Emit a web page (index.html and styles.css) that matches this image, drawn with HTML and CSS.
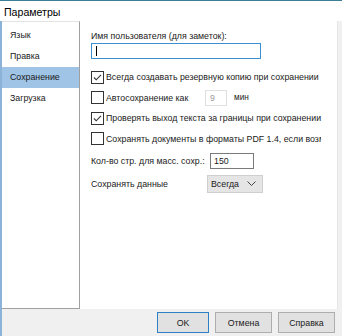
FILE: index.html
```html
<!DOCTYPE html>
<html>
<head>
  <title>Параметры</title>
  <meta charset="utf-8">
  <link rel="stylesheet" href="styles.css">
</head>
<body>
  <div class="window">
    <div class="titlebar">Параметры</div>

    <div class="main">
      <!-- Left list -->
      <div class="nav">
        <div class="nav-item">Язык</div>
        <div class="nav-item">Правка</div>
        <div class="nav-item selected">Сохранение</div>
        <div class="nav-item">Загрузка</div>
      </div>

      <!-- Settings page -->
      <div class="panel">
        <div class="label">Имя пользователя (для заметок):</div>
        <div class="textbox focused"><span class="caret"></span></div>

        <div class="row check-row first">
          <span class="check"><svg viewBox="0 0 13 13" width="13" height="13"><path d="M3 6.5 L5.2 8.8 L10 3.8" fill="none" stroke="#333" stroke-width="1.1"/></svg></span>
          <span>Всегда создавать резервную копию при сохранении</span>
        </div>
        <div class="row check-row">
          <span class="check"></span>
          <span class="autosave">Автосохранение как</span>
          <span class="spin">9</span>
          <span class="unit">мин</span>
        </div>
        <div class="row check-row">
          <span class="check"><svg viewBox="0 0 13 13" width="13" height="13"><path d="M3 6.5 L5.2 8.8 L10 3.8" fill="none" stroke="#333" stroke-width="1.1"/></svg></span>
          <span>Проверять выход текста за границы при сохранении</span>
        </div>
        <div class="row check-row">
          <span class="check"></span>
          <span class="clip">Сохранять документы в форматы PDF 1.4, если возможно</span>
        </div>
        <div class="row field-row">
          <span class="field-label">Кол-во стр. для масс. сохр.:</span>
          <span class="numbox">150</span>
        </div>
        <div class="row field-row">
          <span class="field-label wide">Сохранять данные</span>
          <span class="select">Всегда<svg viewBox="0 0 9 6" width="9" height="6"><path d="M0.5 0.5 L4.5 4.5 L8.5 0.5" fill="none" stroke="#444" stroke-width="1"/></svg></span>
        </div>
      </div>
    </div>

    <div class="footer">
      <button class="btn default">OK</button>
      <button class="btn">Отмена</button>
      <button class="btn">Справка</button>
    </div>
  </div>
</body>
</html>
```

FILE: styles.css
```css
body {
  margin: 0;
  font-family: 'Liberation Sans', 'DejaVu Sans', sans-serif;
  font-size: 8.8px;
  color: #1a1a1a;
  background: #f0f0f0;
}

.window {
  width: 342px;
  height: 336px;
  display: flex;
  flex-direction: column;
  background: #f0f0f0;
  border-top: 1px solid #3d7d96;
  box-sizing: border-box;
  overflow: hidden;
}

.titlebar {
  height: 20px;
  line-height: 22px;
  padding-left: 4px;
  font-size: 10.6px;
  background: #fff;
  color: #000;
}

.main {
  display: flex;
  height: 288px;
  border-left: 2px solid #8bb3d8;
}

.nav {
  width: 78px;
  background: #fff;
  border: 1px solid #a0a0a0;
  border-left: none;
  border-top: 1px solid #e3e3e3;
  padding-top: 3px;
  box-sizing: border-box;
}

.nav-item {
  height: 21px;
  line-height: 21px;
  padding-left: 8px;
}

.nav-item.selected {
  background: #9fc4e6;
}

.panel {
  flex: 1;
  background: #fff;
  margin-right: 4px;
  padding: 8px 0 0 11px;
  border-right: 1px solid #e6e6e6;
}

.label {
  height: 14px;
  line-height: 14px;
}

.textbox {
  width: 168px;
  height: 14px;
  border: 1px solid #3c8fd0;
  background: #fff;
  position: relative;
}

.caret {
  position: absolute;
  left: 4px;
  top: 2px;
  width: 1px;
  height: 10px;
  background: #000;
}

.row {
  display: flex;
  align-items: center;
  white-space: nowrap;
}

.check-row {
  height: 20.5px;
}

.check-row.first {
  margin-top: 8px;
}

.check {
  width: 11px;
  height: 11px;
  border: 1px solid #333;
  background: #fff;
  margin-right: 2px;
  flex: none;
  position: relative;
}

.check svg {
  position: absolute;
  left: -1px;
  top: -1px;
}

.autosave {
  width: 99px;
}

.spin {
  width: 16px;
  height: 14px;
  border: 1px solid #e0e0e0;
  color: #9a9a9a;
  padding-left: 4px;
  line-height: 14px;
}

.unit {
  margin-left: 7px;
  font-size: 8.2px;
}

.clip {
  overflow: hidden;
  width: 215px;
}

.field-row {
  height: 23px;
}

.field-label {
  width: 119px;
}

.field-label.wide {
  width: 116px;
}

.numbox {
  width: 39px;
  height: 14px;
  line-height: 14px;
  border: 1px solid #7a7a7a;
  padding-left: 3px;
  background: #fff;
}

.select {
  display: flex;
  align-items: center;
  justify-content: space-between;
  width: 45px;
  height: 16px;
  padding: 0 6px 0 3px;
  background: #e5e5e5;
  border: 1px solid #cfcfcf;
}

.footer {
  flex: 1;
  display: flex;
  justify-content: flex-end;
  align-items: center;
  gap: 6px;
  padding-right: 7px;
  border-left: 2px solid #8bb3d8;
}

.btn {
  font-family: 'Liberation Sans', 'DejaVu Sans', sans-serif;
  font-size: 8.8px;
  height: 21px;
  padding: 0;
  background: #e1e1e1;
  border: 1px solid #adadad;
  color: #1a1a1a;
  width: 57px;
}

.btn.default {
  border: 1px solid #2f7fc4;
  width: 52px;
}
```
